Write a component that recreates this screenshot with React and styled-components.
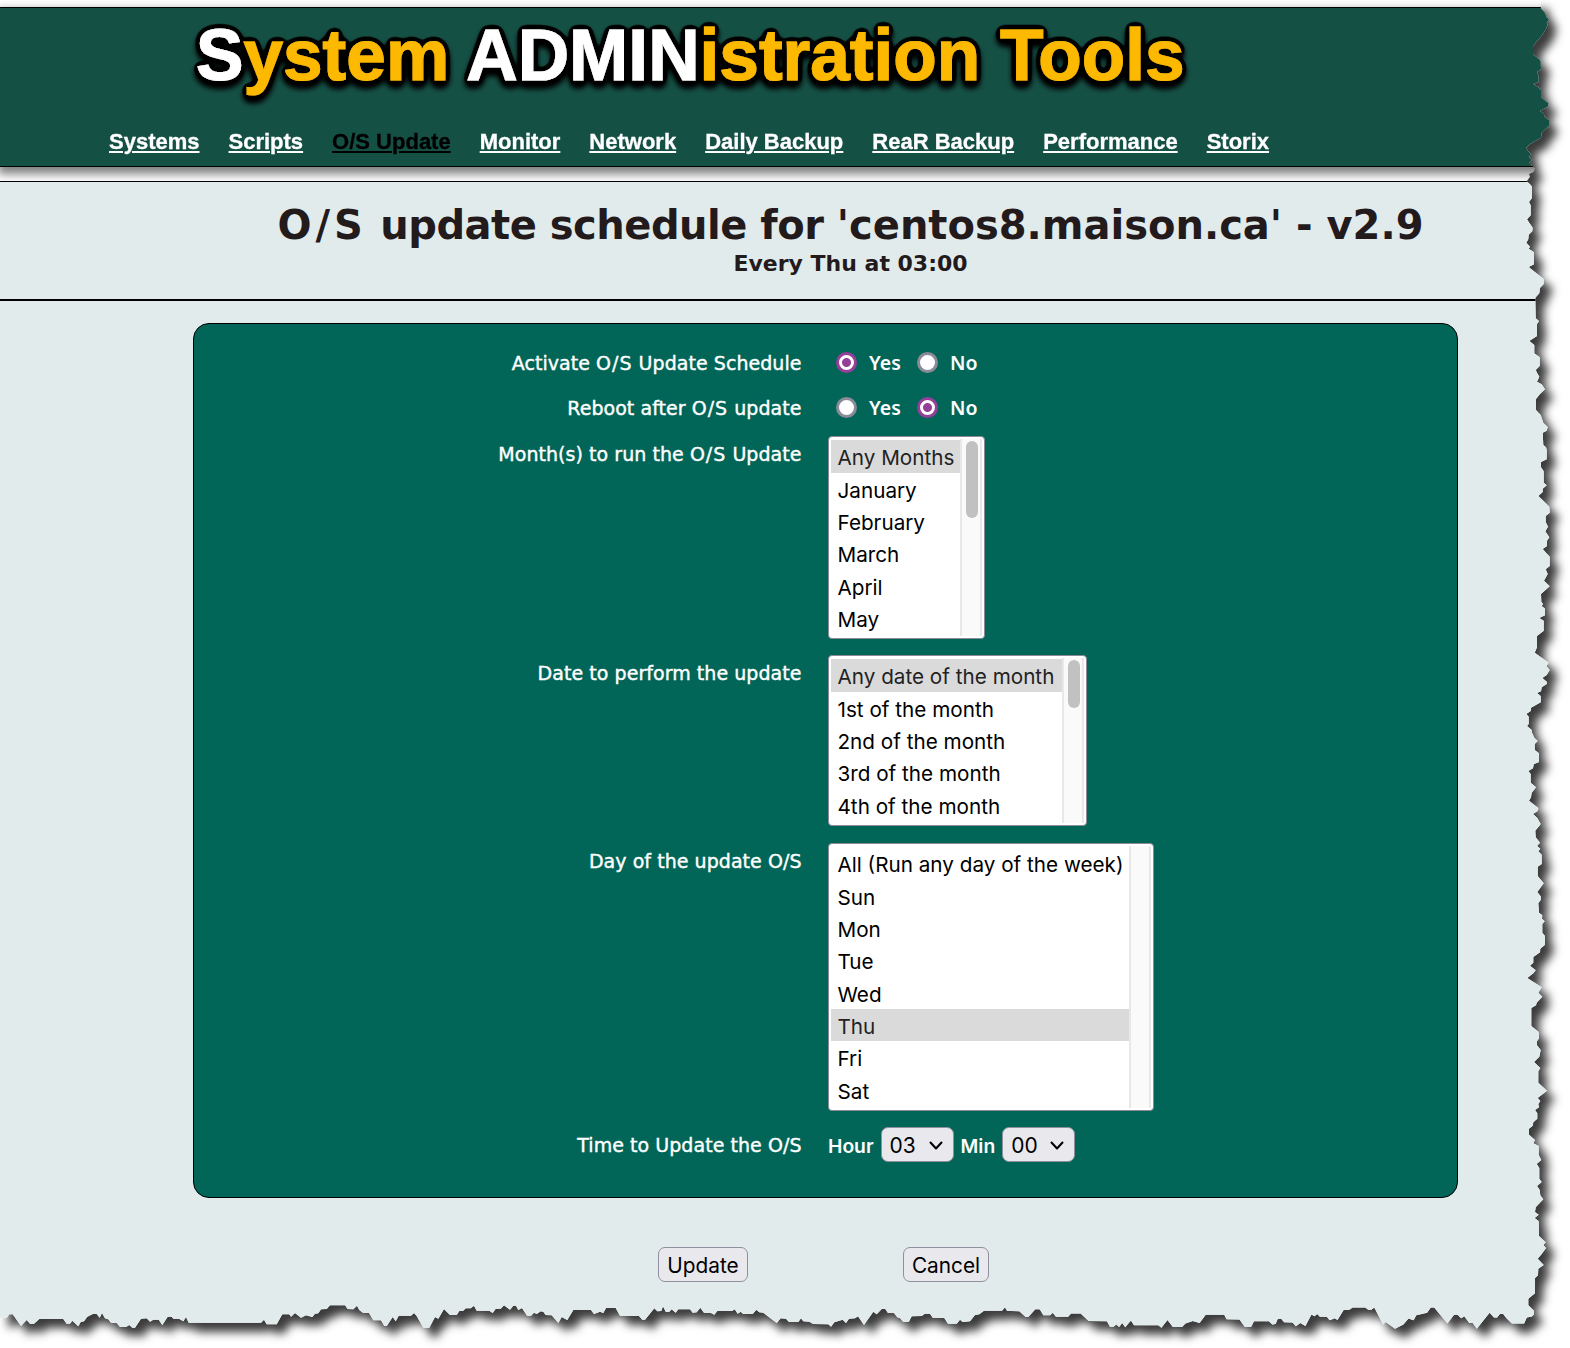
import React, { useState } from "react";
import styled, { createGlobalStyle } from "styled-components";

const GlobalStyle = createGlobalStyle`
  * { box-sizing: border-box; }
  body { margin: 0; background: #fff; overflow: hidden; }
`;

/* Torn paper outline: points per strip, in thirds of a pixel from the strip's origin. */
const RIGHT_TOP = "272,0 272,24 285,38 290,52 297,58 290,68 293,75 285,92 277,105 258,127 249,140 249,162 256,168 272,182 273,208 261,216 266,230 266,246 250,252 263,260 273,270 273,292 296,310 293,320 270,333 282,342 283,350 297,360 297,377 275,398 273,413 240,432 228,444 236,455 243,463 236,470 245,480 238,488 246,497 255,506 250,516 237,522 240,530 230,544 240,553 246,560 246,594 237,606 242,616 242,646 231,658 236,666 248,683 247,694 236,704 235,718 229,728 240,740 236,746 252,757 252,793 236,801 250,812 281,837 281,852 270,864 268,880 256,893 257,955 267,963 261,972 261,1008 238,1023 253,1035 253,1060 269,1072 269,1098 257,1110 262,1120 268,1130 261,1145 275,1153 285,1168 270,1182 258,1197 258,1230 272,1245 280,1268 293,1281 290,1292 278,1298 280,1335 288,1342";
const RIGHT_MIDDLE = "290,0 290,28 273,36 273,52 281,64 281,98 290,106 278,116 278,126 265,138 280,152 298,170 299,188 287,198 287,216 294,230 286,244 298,262 291,272 291,288 278,297 288,308 299,320 299,348 287,358 293,372 282,392 299,409 273,432 274,455 279,462 275,468 285,476 285,496 268,504 281,512 281,542 261,558 261,592 254,608 296,638 289,648 299,660 290,675 277,684 291,696 290,702 275,712 273,724 261,729 272,738 272,757 243,773 242,783 229,792 236,800 236,822 231,828 245,840 245,846 253,863 263,873 254,882 254,900 267,910 267,936 251,943 249,955 235,963 242,972 242,998 258,1012 252,1020 245,1028 243,1042 237,1052 265,1074 264,1082 249,1092 262,1104 272,1122 256,1142 257,1162 270,1178 261,1188 271,1196 265,1204 275,1214 275,1242 263,1250 263,1278 281,1300 262,1326 273,1340";
const RIGHT_BOTTOM = "272,0 265,10 267,38 277,46 276,56 284,64 277,72 277,98 285,108 285,134 271,146 270,157 250,171 250,188 240,197 257,211 250,220 232,234 275,262 265,278 277,290 260,308 258,316 244,324 244,378 266,396 267,415 261,424 261,436 272,450 268,470 252,486 271,504 265,514 265,548 291,572 263,594 271,603 265,612 267,622 255,630 262,640 262,656 250,667 248,677 237,686 237,704 255,720 250,730 266,738 266,765 274,780 260,792 268,804 268,836 275,846 261,858 269,870 271,886 280,898 257,922 255,936 266,944 254,954 266,964 267,1008 287,1027 280,1035 288,1044 275,1062 263,1076 281,1095 265,1106 264,1126 255,1134 255,1180 235,1196 235,1216 252,1232 252,1243";
const BOTTOM_LEFT = "0,113 20,113 28,103 38,103 63,138 80,120 90,131 102,131 118,117 190,117 200,131 210,131 217,122 235,139 242,126 252,124 262,110 280,101 290,102 299,113 306,99 315,115 325,118 333,128 350,129 360,141 378,141 388,135 397,143 405,143 423,116 440,115 450,125 460,119 476,119 487,135 503,110 515,110 520,116 537,116 550,124 558,111 566,128 783,128 792,119 800,133 830,133 847,103 868,103 873,110 885,99 903,113 918,106 937,111 945,101 955,100 963,88 980,87 990,76 1035,76 1043,87 1060,88 1071,77 1078,90 1090,99 1107,99 1120,121 1143,121 1153,138 1160,138 1178,111 1187,124 1196,107 1233,107 1242,99 1250,108 1270,143 1288,143 1305,111 1315,116 1332,87 1350,105 1370,105 1378,93 1390,92 1397,85 1412,85 1422,77 1430,92 1468,92 1478,99 1487,86 1502,86 1512,76 1530,89 1540,77 1548,77 1555,90";
const BOTTOM_MIDDLE = "6,84 22,108 32,108 42,98 50,102 62,94 70,95 77,105 95,106 115,129 125,111 142,120 160,90 213,90 222,102 240,95 250,99 258,84 287,84 300,107 357,108 367,119 375,119 403,85 412,94 424,93 429,79 437,95 447,96 455,88 467,98 475,88 510,88 518,98 530,97 541,83 552,98 573,99 583,104 592,93 636,93 644,88 653,101 662,95 670,102 698,102 709,89 718,97 730,98 770,129 782,115 798,116 807,126 835,126 843,115 850,124 868,125 880,132 925,133 933,140 943,127 968,119 978,129 987,116 1005,115 1014,109 1032,135 1060,95 1070,103 1085,87 1096,87 1104,99 1122,99 1132,112 1140,114 1150,126 1166,126 1175,109 1205,108 1214,101 1230,101 1238,113 1273,114 1284,131 1310,131 1320,119 1328,126 1350,124 1365,105 1378,103 1392,92 1446,92 1455,82 1461,92 1498,94 1517,111 1525,111 1546,88 1558,88";
const BOTTOM_RIGHT = "0,88 10,104 30,104 38,97 47,109 83,109 92,99 120,99 144,121 198,122 207,138 217,138 226,132 234,139 243,127 252,140 269,120 278,134 350,134 359,141 377,118 393,139 420,139 430,129 452,121 472,127 490,103 545,103 552,116 590,117 606,139 624,139 633,122 677,122 687,132 697,130 703,115 714,115 722,125 747,126 757,137 770,127 785,136 803,102 812,107 820,101 828,109 848,109 857,119 872,113 880,118 898,89 915,88 925,81 962,81 971,88 980,88 989,81 1015,132 1023,124 1050,144 1075,132 1090,114 1105,119 1113,104 1145,97 1156,81 1166,81 1205,129 1225,103 1235,103 1246,113 1255,107 1270,127 1280,127 1292,144 1330,97 1343,111 1352,111 1361,100 1370,101 1380,113 1396,129 1432,129 1440,111 1455,108";

const strip = (points, ox, oy, scale = 3) =>
  points.split(" ").map((pair) => {
    const [x, y] = pair.split(",").map(Number);
    return `${(ox + x / scale).toFixed(1)}px ${(oy + y / scale).toFixed(1)}px`;
  });

const tornEdge = [
  "0px 0px",
  ...strip(RIGHT_TOP, 1450, 0),
  ...strip(RIGHT_MIDDLE, 1450, 450),
  ...strip(RIGHT_BOTTOM, 1450, 900),
  ...[
    ...strip(BOTTOM_LEFT, 0, 1280),
    ...strip(BOTTOM_MIDDLE, 520, 1280),
    ...strip(BOTTOM_RIGHT, 1040, 1280, 2.958),
  ].reverse(),
].join(",");

const Shadow = styled.div`
  width: 1570px;
  height: 1348px;
  overflow: hidden;
  filter: drop-shadow(8px 9px 5px rgba(0, 0, 0, 0.77));
`;

const Paper = styled.div`
  height: 1348px;
  padding-top: 7px;
  background: #fff;
  clip-path: polygon(${tornEdge});
  font-family: "DejaVu Sans", Verdana, sans-serif;
`;

const Header = styled.header`
  height: 160px;
  background: #155045;
  border: solid #000;
  border-width: 1px 0;
  box-shadow: 0 5px 9px 2px rgba(0, 0, 0, 0.5);
`;

const Logo = styled.svg`
  display: block;
  width: 1200px;
  height: 116px;
  font: bold 73px "Liberation Sans", Arial, sans-serif;
`;

const Nav = styled.nav`
  display: flex;
  gap: 29px;
  padding-left: 109px;
  font: bold 22px/36px "Liberation Sans", Arial, sans-serif;
  -webkit-text-stroke: 0.3px;
`;

const NavLink = styled.a`
  color: ${(p) => (p.$active ? "#000" : "#fff")};
  text-decoration: underline;
  text-decoration-thickness: 2px;
  text-underline-offset: 2px;
  white-space: nowrap;
`;

const Main = styled.main`
  margin-top: 14px;
  height: 1167px;
  position: relative;
  background: #e2ebec;
  border-top: 1px solid #000;
`;

const Heading = styled.div`
  height: 119px;
  padding: 18px 0 0 131px;
  border-bottom: 2px solid #000;
  color: #231a1c;
  text-align: center;
`;

const Title = styled.h1`
  margin: 0;
  font-size: 40px;
  line-height: 50px;
  white-space: nowrap;
`;

const Spaced = styled.span`
  letter-spacing: ${(p) => p.$by}px;
`;

const Subtitle = styled.h2`
  margin: 0;
  font-size: 22px;
  line-height: 28px;
`;

const Form = styled.form`
  display: flex;
  flex-direction: column;
`;

const Card = styled.section`
  width: 1265px;
  height: 875px;
  margin: 22px 0 0 193px;
  padding-top: 16px;
  background: #016657;
  border: 1px solid #000;
  border-radius: 16px;
`;

const Row = styled.div`
  display: grid;
  grid-template-columns: 607.5px 1fr;
  column-gap: 26.5px;
  height: ${(p) => p.$height}px;
`;

const Label = styled.div`
  padding-top: ${(p) => (p.$raised ? 3 : 8)}px;
  color: #fff;
  font-size: 19px;
  line-height: 30px;
  letter-spacing: 0.05px;
  -webkit-text-stroke: 0.4px;
  text-align: right;
  white-space: nowrap;
`;

const RadioGroup = styled.div`
  display: flex;
  height: 45px;
  padding-left: 8px;
`;

const RadioLabel = styled.label`
  display: flex;
  align-items: center;
  width: 81px;
  gap: 12px;
  color: #fff;
  font: 600 19.5px "Noto Sans", sans-serif;
`;

const Radio = styled.input`
  appearance: none;
  width: 21px;
  height: 21px;
  margin: 0;
  border: 3px solid #8b8b98;
  border-radius: 50%;
  background: #fff;
  &:checked {
    border-color: #963f98;
    background: radial-gradient(circle, #963f98 4px, #fff 5px);
  }
`;

const ListBox = styled.div`
  display: flex;
  width: ${(p) => p.$width}px;
  height: ${(p) => p.$height}px;
  padding: 3px 2px 2px;
  background: #fff;
  border: 1px solid #8b8b98;
  border-radius: 4px;
`;

const Options = styled.div`
  flex: 1;
  padding-top: 0.4px;
  font: 20.7px "Inter", sans-serif;
`;

const Option = styled.div`
  height: 32.35px;
  padding-left: 6.5px;
  line-height: 35px;
  white-space: nowrap;
  color: ${(p) => (p.$selected ? "#222" : "#000")};
  background: ${(p) => (p.$selected ? "#dadada" : "transparent")};
`;

const Track = styled.div`
  width: 22px;
  padding: 2px 0 0 4px;
  margin-top: -1px;
  background: #fafafa;
  border: solid #e8e8e8;
  border-width: 0 2px;
`;

const Thumb = styled.div`
  width: 12px;
  height: ${(p) => p.$size}px;
  background: #c1c1c1;
  border-radius: 6px;
`;

const TimeRow = styled.div`
  display: flex;
  gap: 7px;
  height: 35px;
  color: #fff;
  font: 600 19.3px/38px "Inter", sans-serif;
`;

const Picker = styled.button`
  display: flex;
  align-items: center;
  justify-content: space-between;
  width: 73px;
  height: 35px;
  padding: 2px 10px 0 8px;
  color: #000;
  background: #e9e9ed;
  border: 1px solid #8f8f9d;
  border-radius: 7px;
  font: 21px "Inter", sans-serif;
`;

const Actions = styled.div`
  display: flex;
  gap: 155px;
  margin: 49px 0 0 658px;
`;

const Button = styled.button`
  width: ${(p) => p.$width}px;
  height: 35px;
  padding: 2px 0 0;
  color: #000;
  background: #e9e9ed;
  border: 1px solid #8f8f9d;
  border-radius: 7px;
  font: 20.8px "Inter", sans-serif;
`;

const LINKS = ["Systems", "Scripts", "O/S Update", "Monitor", "Network", "Daily Backup", "ReaR Backup", "Performance", "Storix"];
const MONTHS = ["Any Months", "January", "February", "March", "April", "May"];
const DATES = ["Any date of the month", "1st of the month", "2nd of the month", "3rd of the month", "4th of the month"];
const DAYS = ["All (Run any day of the week)", "Sun", "Mon", "Tue", "Wed", "Thu", "Fri", "Sat"];

function SiteLogo() {
  return (
    <Logo viewBox="0 0 1200 116">
      <defs>
        <filter id="outline" x="-5%" y="-20%" width="110%" height="150%">
          <feGaussianBlur in="SourceAlpha" stdDeviation="3.2" />
          <feComponentTransfer result="edge">
            <feFuncA type="linear" slope="16" intercept="-0.7" />
          </feComponentTransfer>
          <feOffset in="edge" dy="4" />
          <feGaussianBlur stdDeviation="2.5" result="shade" />
          <feMerge>
            <feMergeNode in="shade" />
            <feMergeNode in="edge" />
            <feMergeNode in="SourceGraphic" />
          </feMerge>
        </filter>
      </defs>
      <text x="196" y="72" textLength="988.5" lengthAdjust="spacingAndGlyphs" filter="url(#outline)" fill="#fdb901" stroke="#fdb901" strokeWidth="1">
        <tspan fill="#fff" stroke="#fff">S</tspan>ystem <tspan fill="#fff" stroke="#fff">ADMIN</tspan>istration Tools
      </text>
    </Logo>
  );
}

function YesNo({ name, initial }) {
  const [value, setValue] = useState(initial);
  return (
    <RadioGroup>
      {["Yes", "No"].map((text) => (
        <RadioLabel key={text}>
          <Radio type="radio" name={name} checked={value === text} onChange={() => setValue(text)} />
          {text}
        </RadioLabel>
      ))}
    </RadioGroup>
  );
}

function List({ items, initial, width, height, thumb }) {
  const [value, setValue] = useState(initial);
  return (
    <ListBox $width={width} $height={height} role="listbox">
      <Options>
        {items.map((item) => (
          <Option key={item} role="option" $selected={item === value} onClick={() => setValue(item)}>
            {item}
          </Option>
        ))}
      </Options>
      <Track>{thumb && <Thumb $size={thumb} />}</Track>
    </ListBox>
  );
}

function TimePicker({ value }) {
  return (
    <Picker type="button">
      {value}
      <svg width="14" height="10" viewBox="0 0 14 10" fill="none" stroke="#000" strokeWidth="2" strokeLinecap="round" strokeLinejoin="round">
        <path d="M1.5 1.5 7 7.5l5.5-6" />
      </svg>
    </Picker>
  );
}

export default function App() {
  const os = <Spaced $by={1}>O/S</Spaced>;
  return (
    <Shadow>
      <GlobalStyle />
      <Paper>
        <Header>
          <SiteLogo />
          <Nav>
            {LINKS.map((link) => (
              <NavLink key={link} $active={link === "O/S Update"}>{link}</NavLink>
            ))}
          </Nav>
        </Header>
        <Main>
          <Heading>
            <Title>
              <Spaced $by={4}>O/S</Spaced>
              <Spaced $by={-0.5}> update schedule for </Spaced>
              'centos8.maison.ca' - v2.9
            </Title>
            <Subtitle>Every Thu at 03:00</Subtitle>
          </Heading>
          <Form>
            <Card>
              <Row $height={45}>
                <Label>Activate {os} Update Schedule</Label>
                <YesNo name="activate" initial="Yes" />
              </Row>
              <Row $height={51}>
                <Label>Reboot after {os} update</Label>
                <YesNo name="reboot" initial="No" />
              </Row>
              <Row $height={219}>
                <Label $raised>Month(s) to run the {os} Update</Label>
                <List items={MONTHS} initial="Any Months" width={157} height={203} thumb={77} />
              </Row>
              <Row $height={188}>
                <Label $raised>Date to perform the update</Label>
                <List items={DATES} initial="Any date of the month" width={259} height={171} thumb={48} />
              </Row>
              <Row $height={284}>
                <Label $raised>Day of the update O/S</Label>
                <List items={DAYS} initial="Thu" width={326} height={268} />
              </Row>
              <Row $height={40}>
                <Label $raised>Time to Update the O/S</Label>
                <TimeRow>
                  Hour <TimePicker value="03" /> Min <TimePicker value="00" />
                </TimeRow>
              </Row>
            </Card>
            <Actions>
              <Button type="button" $width={90}>Update</Button>
              <Button type="button" $width={86}>Cancel</Button>
            </Actions>
          </Form>
        </Main>
      </Paper>
    </Shadow>
  );
}
